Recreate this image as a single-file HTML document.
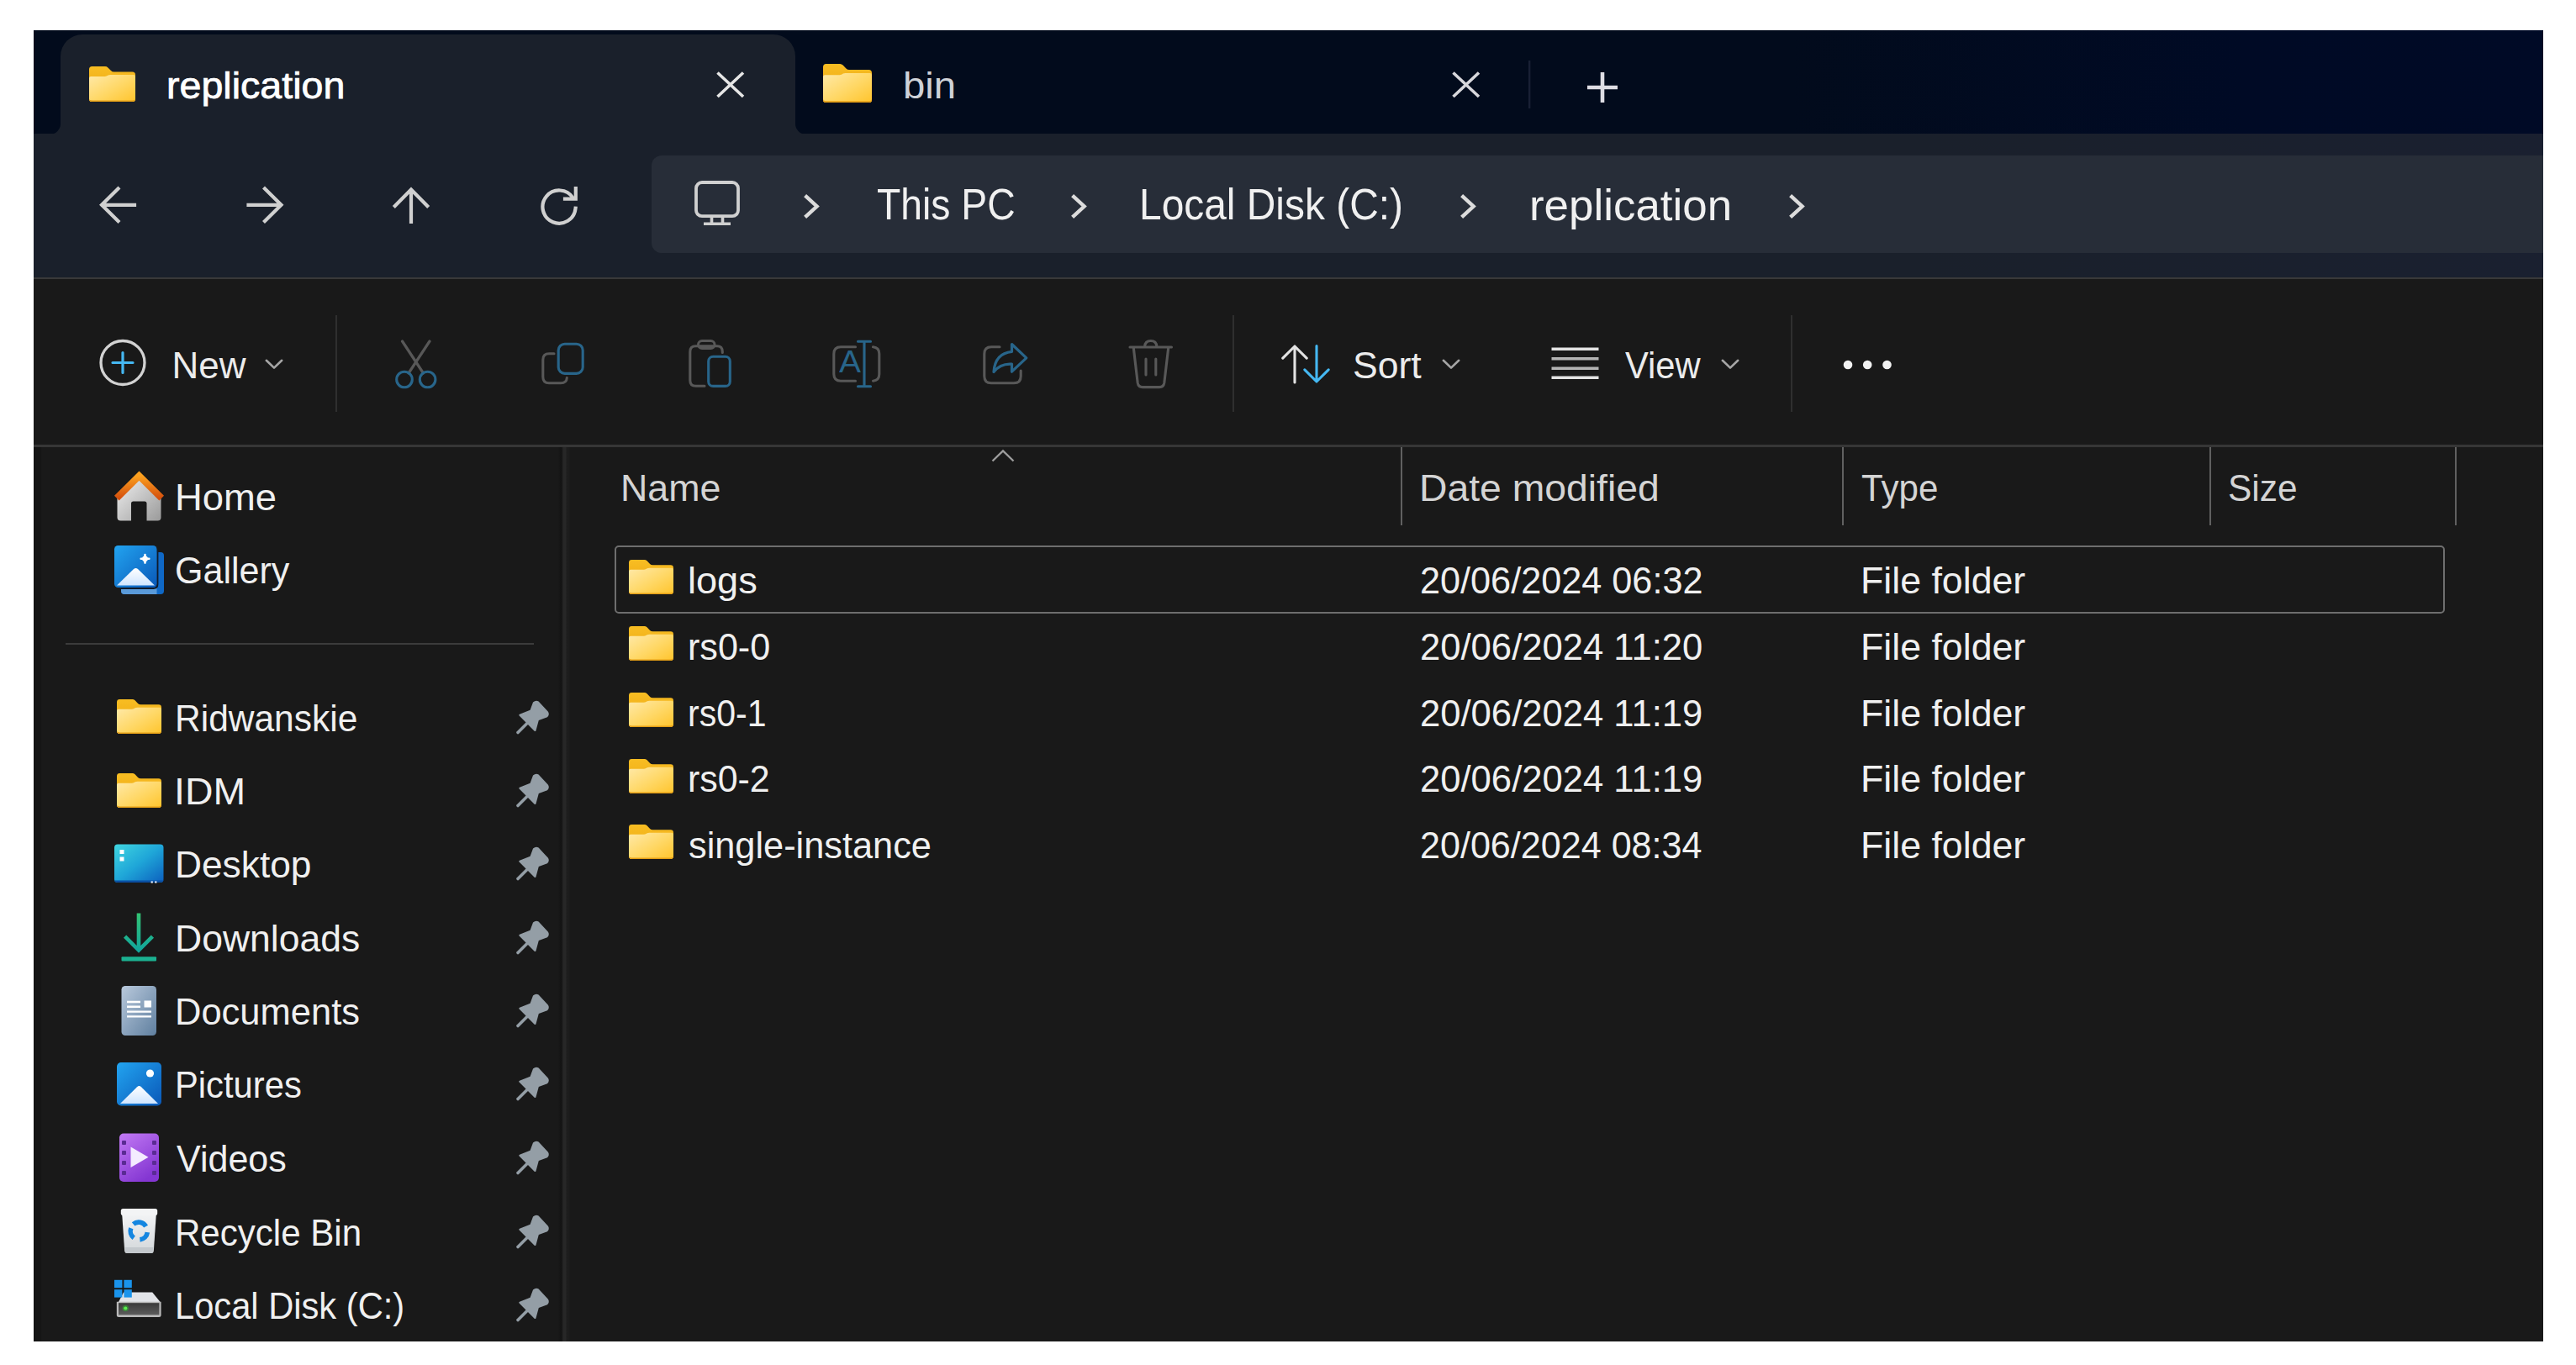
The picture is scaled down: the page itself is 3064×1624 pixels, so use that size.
<!DOCTYPE html>
<html lang="en"><head><meta charset="utf-8"><title>replication - File Explorer</title>
<style>
html,body{margin:0;padding:0;background:#fff;}
body{width:3064px;height:1624px;position:relative;overflow:hidden;font-family:"Liberation Sans",sans-serif;}
.a{position:absolute;}
.t{position:absolute;white-space:nowrap;line-height:1;transform-origin:0 0;display:block;}
svg{position:absolute;overflow:visible;}
</style></head><body>
<svg width="0" height="0" style="left:0;top:0"><defs>
<linearGradient id="gFb" x1="0" y1="0" x2="0" y2="1"><stop offset="0" stop-color="#f8bd22"/><stop offset="1" stop-color="#eaa413"/></linearGradient>
<linearGradient id="gFf" x1="0" y1="0" x2="1" y2="1"><stop offset="0" stop-color="#ffe9a8"/><stop offset="0.55" stop-color="#ffd764"/><stop offset="1" stop-color="#ffc42c"/></linearGradient>
<linearGradient id="gRoof" x1="0" y1="0" x2="0" y2="1"><stop offset="0" stop-color="#fba01f"/><stop offset="1" stop-color="#d5500d"/></linearGradient>
<linearGradient id="gHouse" x1="0" y1="0" x2="1" y2="1"><stop offset="0" stop-color="#f2f2f2"/><stop offset="1" stop-color="#9a9a9a"/></linearGradient>
<linearGradient id="gBlue" x1="0" y1="0" x2="1" y2="1"><stop offset="0" stop-color="#22a4f0"/><stop offset="1" stop-color="#0a58b8"/></linearGradient>
<linearGradient id="gMtn" x1="0" y1="0" x2="0" y2="1"><stop offset="0" stop-color="#ffffff"/><stop offset="1" stop-color="#cfe5ff"/></linearGradient>
<linearGradient id="gDesk" x1="0" y1="0" x2="1" y2="1"><stop offset="0" stop-color="#40d6e0"/><stop offset="0.5" stop-color="#1fa6d8"/><stop offset="1" stop-color="#0c5fbe"/></linearGradient>
<linearGradient id="gDown" x1="0" y1="0" x2="0" y2="1"><stop offset="0" stop-color="#33c473"/><stop offset="1" stop-color="#12a69c"/></linearGradient>
<linearGradient id="gDoc" x1="0" y1="0" x2="1" y2="1"><stop offset="0" stop-color="#b9c9dc"/><stop offset="1" stop-color="#5f7f9f"/></linearGradient>
<linearGradient id="gVid" x1="0" y1="0" x2="0.6" y2="1"><stop offset="0" stop-color="#c27af4"/><stop offset="1" stop-color="#8436d2"/></linearGradient>
<linearGradient id="gBin" x1="0" y1="0" x2="0" y2="1"><stop offset="0" stop-color="#f4f5f6"/><stop offset="1" stop-color="#d3d7da"/></linearGradient>
<linearGradient id="gDrv" x1="0" y1="0" x2="0" y2="1"><stop offset="0" stop-color="#3a3a3a"/><stop offset="1" stop-color="#5c5c5c"/></linearGradient>
</defs></svg>
<div class="a" style="left:40px;top:36px;width:2985px;height:1560px;background:#191919;overflow:hidden"></div>
<div class="a" style="left:40px;top:36px;width:2985px;height:124px;background:linear-gradient(90deg,#020b1c 0,#020b1c 70%,#000a25 88%,#000a26 100%)"></div>
<div class="a" style="left:40px;top:159px;width:2985px;height:171px;background:linear-gradient(90deg,#1a202b 0,#1a202b 75%,#1a2030 100%)"></div>
<svg style="left:0;top:0" width="3064" height="170" viewBox="0 0 3064 170"><path d="M59 160A13 13 0 0 0 72 147V67A26 26 0 0 1 98 41H920A26 26 0 0 1 946 67V147A13 13 0 0 0 959 160Z" fill="#1a202b"/><rect x="1818" y="72" width="2.4" height="57" fill="#182034"/><path d="M853.5 86.5L884 115M884 86.5L853.5 115" stroke="#e6e6e6" stroke-width="3.6" fill="none"/><path d="M1728.5 86.5L1759 115M1759 86.5L1728.5 115" stroke="#d8d8dc" stroke-width="3.6" fill="none"/><path d="M1888 104H1924M1906 86V122" stroke="#dedee4" stroke-width="4.6" fill="none"/></svg>
<svg style="left:106px;top:79px" width="55" height="42" viewBox="0 0 55 42" preserveAspectRatio="none"><path d="M0 3.5Q0 0 3.5 0H19Q21 0 22.4 1.4L26 5Q27.4 6.5 29.5 6.5H51.5Q55 6.5 55 10V38.5Q55 42 51.5 42H3.5Q0 42 0 38.5Z" fill="url(#gFb)"/><path d="M0 14Q0 12 2 12H18.5Q20 12 21.2 11.3L22.6 10.6Q23.8 10 25.2 10H53Q55 10 55 12V38.5Q55 42 51.5 42H3.5Q0 42 0 38.5Z" fill="url(#gFf)"/><path d="M0 38.2V38.5Q0 42 3.5 42H51.5Q55 42 55 38.5V38.2Q55 40.4 51.5 40.4H3.5Q0 40.4 0 38.2Z" fill="#e59f16"/></svg>
<svg style="left:979px;top:76px" width="58" height="46" viewBox="0 0 55 42" preserveAspectRatio="none"><path d="M0 3.5Q0 0 3.5 0H19Q21 0 22.4 1.4L26 5Q27.4 6.5 29.5 6.5H51.5Q55 6.5 55 10V38.5Q55 42 51.5 42H3.5Q0 42 0 38.5Z" fill="url(#gFb)"/><path d="M0 14Q0 12 2 12H18.5Q20 12 21.2 11.3L22.6 10.6Q23.8 10 25.2 10H53Q55 10 55 12V38.5Q55 42 51.5 42H3.5Q0 42 0 38.5Z" fill="url(#gFf)"/><path d="M0 38.2V38.5Q0 42 3.5 42H51.5Q55 42 55 38.5V38.2Q55 40.4 51.5 40.4H3.5Q0 40.4 0 38.2Z" fill="#e59f16"/></svg>
<span class="t" style="left:198.38px;top:79.75px;font-size:44px;color:#ffffff;transform:scaleX(1.0587);-webkit-text-stroke:0.75px #fff;">replication</span>
<span class="t" style="left:1073.85px;top:79.75px;font-size:44px;color:#cfd2d8;transform:scaleX(1.0741);">bin</span>
<div class="a" style="left:40px;top:329.8px;width:2985px;height:2.6px;background:#393939"></div>
<div class="a" style="left:775px;top:185px;width:2250px;height:116px;background:#272d38;border-radius:12px 0 0 12px"></div>
<svg style="left:0;top:160px" width="900" height="170" viewBox="0 160 900 170" fill="none" stroke="#d0d0d0" stroke-width="4.2" stroke-linecap="square" stroke-linejoin="miter"><path d="M122 243.8H160M140.5 224.5L121 243.8L140.5 263"/><path d="M295.5 243.8H333.5M315 224.5L334.5 243.8L315 263"/><path d="M489 226.5V264M469.8 245L489 225.6L508.2 245"/><path d="M684.6 247.7A19.6 19.6 0 1 1 681.5 235.4"/><path d="M684.8 224V236.6H672"/><rect x="828" y="217" width="50" height="40.2" rx="7" stroke-width="3.8"/><path d="M846.5 258V265M859.5 258V265M837 266.2H869" stroke-width="3.6" stroke-linecap="butt"/></svg>
<svg style="left:955px;top:230px" width="20" height="31" viewBox="0 0 20 31"><path d="M2.6 2.6L16.6 15.5L2.6 28.4" fill="none" stroke="#dcdcdc" stroke-width="4.4" stroke-linecap="butt" stroke-linejoin="miter"/></svg>
<svg style="left:1272.5px;top:230px" width="20" height="31" viewBox="0 0 20 31"><path d="M2.6 2.6L16.6 15.5L2.6 28.4" fill="none" stroke="#dcdcdc" stroke-width="4.4" stroke-linecap="butt" stroke-linejoin="miter"/></svg>
<svg style="left:1736px;top:230px" width="20" height="31" viewBox="0 0 20 31"><path d="M2.6 2.6L16.6 15.5L2.6 28.4" fill="none" stroke="#dcdcdc" stroke-width="4.4" stroke-linecap="butt" stroke-linejoin="miter"/></svg>
<svg style="left:2126.5px;top:230px" width="20" height="31" viewBox="0 0 20 31"><path d="M2.6 2.6L16.6 15.5L2.6 28.4" fill="none" stroke="#dcdcdc" stroke-width="4.4" stroke-linecap="butt" stroke-linejoin="miter"/></svg>
<span class="t" style="left:1043.11px;top:216.98px;font-size:52px;color:#f0f0f0;transform:scaleX(0.8901);">This PC</span>
<span class="t" style="left:1355.32px;top:216.98px;font-size:52px;color:#f0f0f0;transform:scaleX(0.9209);">Local Disk (C:)</span>
<span class="t" style="left:1819.45px;top:217.98px;font-size:52px;color:#f0f0f0;transform:scaleX(1.0173);">replication</span>
<div class="a" style="left:40px;top:529.2px;width:2985px;height:2.6px;background:#363636"></div>
<div class="a" style="left:398.5px;top:375px;width:2.2px;height:115px;background:#2f2f2f"></div>
<div class="a" style="left:1466px;top:375px;width:2.2px;height:115px;background:#2f2f2f"></div>
<div class="a" style="left:2130px;top:375px;width:2.2px;height:115px;background:#2f2f2f"></div>
<svg style="left:0;top:340px" width="3064" height="190" viewBox="0 340 3064 190" fill="none" stroke-width="3.1" stroke-linecap="round" stroke-linejoin="round"><circle cx="146" cy="431.5" r="26" stroke="#d2d2d2" stroke-width="3.3"/><path d="M134 431.5H158M146 419.5V443.5" stroke="#45b8f2" stroke-width="3.2"/><path d="M478.5 406L503.5 444M511 406L486 444" stroke="#585858" stroke-width="3.2"/><circle cx="481" cy="451.5" r="9.3" stroke="#28658a"/><circle cx="508.6" cy="451.5" r="9.3" stroke="#28658a"/><path d="M659 420.8H653Q645.8 420.8 645.8 428V448.5Q645.8 455.8 653 455.8H667Q674 455.8 674.3 449.5" stroke="#585858"/><rect x="664.2" y="409.2" width="29" height="35.2" rx="7.5" stroke="#28658a"/><path d="M838 459.3H827.5Q820.8 459.3 820.8 452.5V418.5Q820.8 411.8 827.5 411.8H853Q859.3 411.8 859.3 418.5V419.5" stroke="#585858"/><rect x="830.5" y="405.6" width="19.5" height="9" rx="4.5" stroke="#585858" stroke-width="3"/><rect x="842.7" y="424.2" width="25.6" height="35.2" rx="5.5" stroke="#28658a"/><path d="M1017.5 412.8H1000Q991.8 412.8 991.8 421V445Q991.8 453.2 1000 453.2H1017.5M1038.5 412.8Q1045.8 413.5 1045.8 421V445Q1045.8 452.5 1038.5 453.2" stroke="#585858"/><path d="M1020.5 406.2H1035.5M1020.5 459.8H1035.5M1028 406.2V459.8" stroke="#28658a"/><path d="M1189 412.8H1179Q1170.8 412.8 1170.8 421V447.5Q1170.8 455.8 1179 455.8H1206Q1214.2 455.8 1214.2 447.5V441" stroke="#585858"/><path d="M1203.5 409.5L1220.8 425.8L1203.5 442.2V433.2Q1190 432.2 1182 442.5Q1183.5 420.5 1203.5 418.4Z" stroke="#28658a" stroke-width="3.2"/><path d="M1344 413H1393.5M1361.5 412.5Q1362 405.5 1368.8 405.5Q1375.5 405.5 1376 412.5M1348.3 414L1353.2 455.5Q1354 460.6 1359 460.6H1379Q1384 460.6 1384.8 455.5L1389.7 414M1363 427V446M1374.8 427V446" stroke="#585858"/><path d="M1540 412.5V455M1525.8 426.2L1540 412L1554.2 426.2" stroke="#e2e2e2"/><path d="M1566 411.5V454M1551.8 439.8L1566 454L1580.2 439.8" stroke="#45b8f2"/><path d="M1845.5 415.3H1901.5M1845.5 449.3H1901.5" stroke="#e4e4e4" stroke-width="3.6" stroke-linecap="butt"/><path d="M1845.5 426.8H1901.5M1845.5 438.2H1901.5" stroke="#b4b4b4" stroke-width="3.6" stroke-linecap="butt"/><circle cx="2198" cy="434" r="5.3" fill="#f2f2f2"/><circle cx="2221.2" cy="434" r="5.3" fill="#f2f2f2"/><circle cx="2244.5" cy="434" r="5.3" fill="#f2f2f2"/></svg>
<span class="a" style="left:997.5px;top:412.5px;font-size:36px;line-height:1;color:#28658a;transform:scaleX(1.08);transform-origin:0 0">A</span>
<svg style="left:315px;top:427px" width="22" height="13" viewBox="0 0 22 13"><path d="M1.8 1.8L11 10.6L20.2 1.8" fill="none" stroke="#a6a6a6" stroke-width="2.6" stroke-linecap="round" stroke-linejoin="round"/></svg>
<svg style="left:1714.5px;top:427px" width="22" height="13" viewBox="0 0 22 13"><path d="M1.8 1.8L11 10.6L20.2 1.8" fill="none" stroke="#a6a6a6" stroke-width="2.6" stroke-linecap="round" stroke-linejoin="round"/></svg>
<svg style="left:2046.5px;top:427px" width="22" height="13" viewBox="0 0 22 13"><path d="M1.8 1.8L11 10.6L20.2 1.8" fill="none" stroke="#a6a6a6" stroke-width="2.6" stroke-linecap="round" stroke-linejoin="round"/></svg>
<span class="t" style="left:204.50px;top:412.75px;font-size:44px;color:#ececec;transform:scaleX(1.0000);">New</span>
<span class="t" style="left:1608.97px;top:412.75px;font-size:44px;color:#ececec;transform:scaleX(1.0128);">Sort</span>
<span class="t" style="left:1932.50px;top:412.75px;font-size:44px;color:#ececec;transform:scaleX(0.9474);">View</span>
<div class="a" style="left:40px;top:532px;width:10px;height:1064px;background:linear-gradient(90deg,#141414 0,#141414 75%,#191919 100%)"></div>
<div class="a" style="left:664px;top:532px;width:14px;height:1064px;background:linear-gradient(90deg,#191919 0,#141414 20%,#151515 30%,#272727 42%,#272727 62%,#1e1e1e 72%,#1d1d1d 92%,#191919 100%)"></div>
<div class="a" style="left:77.5px;top:764.8px;width:557px;height:2.6px;background:#3b3b3b"></div>
<span class="t" style="left:207.91px;top:570.25px;font-size:44px;color:#f0f0f0;transform:scaleX(1.0310);">Home</span>
<span class="t" style="left:208.04px;top:656.75px;font-size:44px;color:#f0f0f0;transform:scaleX(0.9781);">Gallery</span>
<span class="t" style="left:208.10px;top:832.75px;font-size:44px;color:#f0f0f0;transform:scaleX(0.9661);">Ridwanskie</span>
<span class="t" style="left:206.78px;top:919.75px;font-size:44px;color:#f0f0f0;transform:scaleX(1.0541);">IDM</span>
<span class="t" style="left:207.98px;top:1006.75px;font-size:44px;color:#f0f0f0;transform:scaleX(1.0064);">Desktop</span>
<span class="t" style="left:207.96px;top:1094.75px;font-size:44px;color:#f0f0f0;transform:scaleX(1.0117);">Downloads</span>
<span class="t" style="left:208.03px;top:1181.75px;font-size:44px;color:#f0f0f0;transform:scaleX(0.9886);">Documents</span>
<span class="t" style="left:208.15px;top:1268.75px;font-size:44px;color:#f0f0f0;transform:scaleX(0.9484);">Pictures</span>
<span class="t" style="left:210.00px;top:1356.75px;font-size:44px;color:#f0f0f0;transform:scaleX(0.9774);">Videos</span>
<span class="t" style="left:208.13px;top:1444.75px;font-size:44px;color:#f0f0f0;transform:scaleX(0.9559);">Recycle Bin</span>
<span class="t" style="left:208.16px;top:1531.75px;font-size:44px;color:#f0f0f0;transform:scaleX(0.9470);">Local Disk (C:)</span>
<svg style="left:614px;top:834px" width="40" height="40" viewBox="614 834 40 40"><path d="M634 835.5Q637.5 832.5 640.6 834.6L652 846.8Q654 850.5 651 853.2L640.8 857L637.4 869.5Q636.4 870.6 635.4 869.4L617.6 851.6Q616.6 850.4 618 849.8L630.6 844.8Z" fill="#949ea6"/><path d="M627.5 860L616 871.5" stroke="#949ea6" stroke-width="3.6" stroke-linecap="round"/></svg>
<svg style="left:614px;top:921px" width="40" height="40" viewBox="614 834 40 40"><path d="M634 835.5Q637.5 832.5 640.6 834.6L652 846.8Q654 850.5 651 853.2L640.8 857L637.4 869.5Q636.4 870.6 635.4 869.4L617.6 851.6Q616.6 850.4 618 849.8L630.6 844.8Z" fill="#949ea6"/><path d="M627.5 860L616 871.5" stroke="#949ea6" stroke-width="3.6" stroke-linecap="round"/></svg>
<svg style="left:614px;top:1008px" width="40" height="40" viewBox="614 834 40 40"><path d="M634 835.5Q637.5 832.5 640.6 834.6L652 846.8Q654 850.5 651 853.2L640.8 857L637.4 869.5Q636.4 870.6 635.4 869.4L617.6 851.6Q616.6 850.4 618 849.8L630.6 844.8Z" fill="#949ea6"/><path d="M627.5 860L616 871.5" stroke="#949ea6" stroke-width="3.6" stroke-linecap="round"/></svg>
<svg style="left:614px;top:1096px" width="40" height="40" viewBox="614 834 40 40"><path d="M634 835.5Q637.5 832.5 640.6 834.6L652 846.8Q654 850.5 651 853.2L640.8 857L637.4 869.5Q636.4 870.6 635.4 869.4L617.6 851.6Q616.6 850.4 618 849.8L630.6 844.8Z" fill="#949ea6"/><path d="M627.5 860L616 871.5" stroke="#949ea6" stroke-width="3.6" stroke-linecap="round"/></svg>
<svg style="left:614px;top:1183px" width="40" height="40" viewBox="614 834 40 40"><path d="M634 835.5Q637.5 832.5 640.6 834.6L652 846.8Q654 850.5 651 853.2L640.8 857L637.4 869.5Q636.4 870.6 635.4 869.4L617.6 851.6Q616.6 850.4 618 849.8L630.6 844.8Z" fill="#949ea6"/><path d="M627.5 860L616 871.5" stroke="#949ea6" stroke-width="3.6" stroke-linecap="round"/></svg>
<svg style="left:614px;top:1270px" width="40" height="40" viewBox="614 834 40 40"><path d="M634 835.5Q637.5 832.5 640.6 834.6L652 846.8Q654 850.5 651 853.2L640.8 857L637.4 869.5Q636.4 870.6 635.4 869.4L617.6 851.6Q616.6 850.4 618 849.8L630.6 844.8Z" fill="#949ea6"/><path d="M627.5 860L616 871.5" stroke="#949ea6" stroke-width="3.6" stroke-linecap="round"/></svg>
<svg style="left:614px;top:1358px" width="40" height="40" viewBox="614 834 40 40"><path d="M634 835.5Q637.5 832.5 640.6 834.6L652 846.8Q654 850.5 651 853.2L640.8 857L637.4 869.5Q636.4 870.6 635.4 869.4L617.6 851.6Q616.6 850.4 618 849.8L630.6 844.8Z" fill="#949ea6"/><path d="M627.5 860L616 871.5" stroke="#949ea6" stroke-width="3.6" stroke-linecap="round"/></svg>
<svg style="left:614px;top:1446px" width="40" height="40" viewBox="614 834 40 40"><path d="M634 835.5Q637.5 832.5 640.6 834.6L652 846.8Q654 850.5 651 853.2L640.8 857L637.4 869.5Q636.4 870.6 635.4 869.4L617.6 851.6Q616.6 850.4 618 849.8L630.6 844.8Z" fill="#949ea6"/><path d="M627.5 860L616 871.5" stroke="#949ea6" stroke-width="3.6" stroke-linecap="round"/></svg>
<svg style="left:614px;top:1533px" width="40" height="40" viewBox="614 834 40 40"><path d="M634 835.5Q637.5 832.5 640.6 834.6L652 846.8Q654 850.5 651 853.2L640.8 857L637.4 869.5Q636.4 870.6 635.4 869.4L617.6 851.6Q616.6 850.4 618 849.8L630.6 844.8Z" fill="#949ea6"/><path d="M627.5 860L616 871.5" stroke="#949ea6" stroke-width="3.6" stroke-linecap="round"/></svg>
<svg style="left:139px;top:832px" width="53" height="41" viewBox="0 0 55 42" preserveAspectRatio="none"><path d="M0 3.5Q0 0 3.5 0H19Q21 0 22.4 1.4L26 5Q27.4 6.5 29.5 6.5H51.5Q55 6.5 55 10V38.5Q55 42 51.5 42H3.5Q0 42 0 38.5Z" fill="url(#gFb)"/><path d="M0 14Q0 12 2 12H18.5Q20 12 21.2 11.3L22.6 10.6Q23.8 10 25.2 10H53Q55 10 55 12V38.5Q55 42 51.5 42H3.5Q0 42 0 38.5Z" fill="url(#gFf)"/><path d="M0 38.2V38.5Q0 42 3.5 42H51.5Q55 42 55 38.5V38.2Q55 40.4 51.5 40.4H3.5Q0 40.4 0 38.2Z" fill="#e59f16"/></svg>
<svg style="left:139px;top:919.5px" width="53" height="41" viewBox="0 0 55 42" preserveAspectRatio="none"><path d="M0 3.5Q0 0 3.5 0H19Q21 0 22.4 1.4L26 5Q27.4 6.5 29.5 6.5H51.5Q55 6.5 55 10V38.5Q55 42 51.5 42H3.5Q0 42 0 38.5Z" fill="url(#gFb)"/><path d="M0 14Q0 12 2 12H18.5Q20 12 21.2 11.3L22.6 10.6Q23.8 10 25.2 10H53Q55 10 55 12V38.5Q55 42 51.5 42H3.5Q0 42 0 38.5Z" fill="url(#gFf)"/><path d="M0 38.2V38.5Q0 42 3.5 42H51.5Q55 42 55 38.5V38.2Q55 40.4 51.5 40.4H3.5Q0 40.4 0 38.2Z" fill="#e59f16"/></svg>
<svg style="left:0;top:532px" width="700" height="1064" viewBox="0 532 700 1064"><path d="M139.5 592L165.5 567L191.5 592V615.5Q191.5 619.5 187.5 619.5H143.5Q139.5 619.5 139.5 615.5Z" fill="url(#gHouse)"/><path d="M156 620V599Q156 596.5 158.5 596.5H172Q174.5 596.5 174.5 599V620Z" fill="#191919"/><path d="M138.8 592.6L165.5 566.2L192.2 592.6" fill="none" stroke="url(#gRoof)" stroke-width="8" stroke-linecap="butt" stroke-linejoin="miter"/><rect x="144" y="657" width="51" height="50" rx="4" fill="#0f68c6"/><path d="M144 698.5H186.5V707H148Q144 707 144 703Z" fill="#5a9ad9"/><path d="M187.3 655V695Q187.3 699.8 182.5 699.8H142" fill="none" stroke="#0f1a2a" stroke-width="2.2"/><rect x="136" y="649" width="50.5" height="50" rx="4.5" fill="url(#gBlue)"/><path d="M139 696.5L159 677Q161.5 674.8 164 677L184 696.5Z" fill="url(#gMtn)"/><circle cx="172.5" cy="664.8" r="3.4" fill="#fff"/><path d="M172.5 660V669.6M167.7 664.8H177.3" stroke="#fff" stroke-width="2.6" stroke-linecap="round"/><rect x="136" y="1004.5" width="58.5" height="45.5" rx="4" fill="url(#gDesk)"/><path d="M136 1047.4H194.5V1046.5Q194.5 1050 190.5 1050H140Q136 1050 136 1046.5Z" fill="#0a4fa2"/><rect x="142.5" y="1011" width="5" height="5" fill="#fff"/><rect x="142.5" y="1019.5" width="5" height="5" fill="#fff"/><rect x="179.6" y="1048.4" width="2.2" height="2.2" fill="#e8f2ff"/><rect x="184.2" y="1048.4" width="2.2" height="2.2" fill="#e8f2ff"/><path d="M165 1086.5V1130M148.6 1114.2L165 1130.6L181.4 1114.2" fill="none" stroke="url(#gDown)" stroke-width="4.6" stroke-linecap="butt" stroke-linejoin="miter"/><rect x="144.5" y="1138.2" width="41.5" height="5.2" rx="1" fill="#1bb191"/><rect x="144.5" y="1173" width="41.5" height="59" rx="4.5" fill="url(#gDoc)"/><path d="M151 1192H167M151 1197.8H167M151 1203.6H180M151 1209.4H180" stroke="#fff" stroke-width="2.4" fill="none"/><rect x="171.5" y="1190.5" width="8.5" height="8" fill="#fff"/><rect x="139" y="1264" width="53" height="51.5" rx="5" fill="url(#gBlue)"/><path d="M143 1313L163 1293.2Q165.5 1291 168 1293.2L188 1313Z" fill="url(#gMtn)"/><circle cx="178.5" cy="1277" r="4.6" fill="#fff"/><rect x="142" y="1348.5" width="47" height="57.5" rx="5" fill="url(#gVid)"/><rect x="145" y="1357" width="5" height="5" rx="1" fill="#5a2b93"/><rect x="145" y="1369" width="5" height="5" rx="1" fill="#5a2b93"/><rect x="145" y="1381" width="5" height="5" rx="1" fill="#5a2b93"/><rect x="145" y="1393" width="5" height="5" rx="1" fill="#5a2b93"/><rect x="181" y="1357" width="5" height="5" rx="1" fill="#5a2b93"/><rect x="181" y="1369" width="5" height="5" rx="1" fill="#5a2b93"/><rect x="181" y="1381" width="5" height="5" rx="1" fill="#5a2b93"/><rect x="181" y="1393" width="5" height="5" rx="1" fill="#5a2b93"/><path d="M155.5 1364.5V1389L176.5 1376.8Z" fill="#f4ecff"/><path d="M145 1442H186L182.8 1488.5Q182.6 1491 180 1491H151Q148.4 1491 148.2 1488.5Z" fill="url(#gBin)"/><rect x="143.8" y="1438" width="43.4" height="8" rx="2.5" fill="#f3f4f5"/><path d="M148.6 1484H182.4L182 1488.5Q181.8 1491 179.5 1491H151.5Q149.2 1491 149 1488.5Z" fill="#c3c8cc"/><g fill="none" stroke="#1486e0" stroke-width="5.6"><path d="M158.6 1456.4A10 10 0 0 1 173.6 1459.2"/><path d="M175.3 1466.2A10 10 0 0 1 166.4 1474.9"/><path d="M159.2 1472.8A10 10 0 0 1 155.8 1461.2"/></g><path d="M147 1537.4H181.2L190.6 1549H141Z" fill="#e2e4e8"/><rect x="136" y="1522.8" width="9.4" height="9.4" fill="#1a94ec"/><rect x="136" y="1534.2" width="9.4" height="9.4" fill="#1a94ec"/><rect x="147.4" y="1522.8" width="9.4" height="9.4" fill="#1a94ec"/><rect x="147.4" y="1534.2" width="9.4" height="9.4" fill="#1a94ec"/><path d="M138.8 1548.8H191.6V1564.5Q191.6 1567 189 1567H141.4Q138.8 1567 138.8 1564.5Z" fill="#b9b9b9"/><rect x="141" y="1550.2" width="48.4" height="14.2" fill="url(#gDrv)"/><circle cx="149.3" cy="1556.5" r="3.8" fill="#2fbf2f" opacity="0.45"/><circle cx="149.3" cy="1556.5" r="2.1" fill="#58ee4e"/></svg>
<div class="a" style="left:1666.3px;top:532px;width:2.2px;height:93px;background:#606060"></div>
<div class="a" style="left:2191.3px;top:532px;width:2.2px;height:93px;background:#606060"></div>
<div class="a" style="left:2628.3px;top:532px;width:2.2px;height:93px;background:#606060"></div>
<div class="a" style="left:2919.8px;top:532px;width:2.2px;height:93px;background:#606060"></div>
<svg style="left:1179px;top:534px" width="28" height="16" viewBox="0 0 28 16"><path d="M1.5 14.5L14 2.5L26.5 14.5" fill="none" stroke="#9c9c9c" stroke-width="2.4"/></svg>
<span class="t" style="left:737.95px;top:558.75px;font-size:44px;color:#d4d4d4;transform:scaleX(1.0177);">Name</span>
<span class="t" style="left:1687.84px;top:558.75px;font-size:44px;color:#d4d4d4;transform:scaleX(1.0526);">Date modified</span>
<span class="t" style="left:2214.00px;top:558.75px;font-size:44px;color:#d4d4d4;transform:scaleX(0.9574);">Type</span>
<span class="t" style="left:2650.07px;top:558.75px;font-size:44px;color:#d4d4d4;transform:scaleX(0.9634);">Size</span>
<div class="a" style="left:730.5px;top:648.5px;width:2177px;height:81.5px;box-sizing:border-box;border:2.4px solid #6e6e6e;border-radius:5px"></div>
<svg style="left:748px;top:666px" width="53" height="41" viewBox="0 0 55 42" preserveAspectRatio="none"><path d="M0 3.5Q0 0 3.5 0H19Q21 0 22.4 1.4L26 5Q27.4 6.5 29.5 6.5H51.5Q55 6.5 55 10V38.5Q55 42 51.5 42H3.5Q0 42 0 38.5Z" fill="url(#gFb)"/><path d="M0 14Q0 12 2 12H18.5Q20 12 21.2 11.3L22.6 10.6Q23.8 10 25.2 10H53Q55 10 55 12V38.5Q55 42 51.5 42H3.5Q0 42 0 38.5Z" fill="url(#gFf)"/><path d="M0 38.2V38.5Q0 42 3.5 42H51.5Q55 42 55 38.5V38.2Q55 40.4 51.5 40.4H3.5Q0 40.4 0 38.2Z" fill="#e59f16"/></svg>
<span class="t" style="left:817.95px;top:668.75px;font-size:44px;color:#f0f0f0;transform:scaleX(1.0256);">logs</span>
<span class="t" style="left:1689.04px;top:668.75px;font-size:44px;color:#f0f0f0;transform:scaleX(0.9823);">20/06/2024 06:32</span>
<span class="t" style="left:2212.95px;top:668.75px;font-size:44px;color:#f0f0f0;transform:scaleX(1.0158);">File folder</span>
<svg style="left:748px;top:745px" width="53" height="41" viewBox="0 0 55 42" preserveAspectRatio="none"><path d="M0 3.5Q0 0 3.5 0H19Q21 0 22.4 1.4L26 5Q27.4 6.5 29.5 6.5H51.5Q55 6.5 55 10V38.5Q55 42 51.5 42H3.5Q0 42 0 38.5Z" fill="url(#gFb)"/><path d="M0 14Q0 12 2 12H18.5Q20 12 21.2 11.3L22.6 10.6Q23.8 10 25.2 10H53Q55 10 55 12V38.5Q55 42 51.5 42H3.5Q0 42 0 38.5Z" fill="url(#gFf)"/><path d="M0 38.2V38.5Q0 42 3.5 42H51.5Q55 42 55 38.5V38.2Q55 40.4 51.5 40.4H3.5Q0 40.4 0 38.2Z" fill="#e59f16"/></svg>
<span class="t" style="left:818.04px;top:747.75px;font-size:44px;color:#f0f0f0;transform:scaleX(0.9794);">rs0-0</span>
<span class="t" style="left:1689.02px;top:747.75px;font-size:44px;color:#f0f0f0;transform:scaleX(0.9911);">20/06/2024 11:20</span>
<span class="t" style="left:2212.95px;top:747.75px;font-size:44px;color:#f0f0f0;transform:scaleX(1.0158);">File folder</span>
<svg style="left:748px;top:824px" width="53" height="41" viewBox="0 0 55 42" preserveAspectRatio="none"><path d="M0 3.5Q0 0 3.5 0H19Q21 0 22.4 1.4L26 5Q27.4 6.5 29.5 6.5H51.5Q55 6.5 55 10V38.5Q55 42 51.5 42H3.5Q0 42 0 38.5Z" fill="url(#gFb)"/><path d="M0 14Q0 12 2 12H18.5Q20 12 21.2 11.3L22.6 10.6Q23.8 10 25.2 10H53Q55 10 55 12V38.5Q55 42 51.5 42H3.5Q0 42 0 38.5Z" fill="url(#gFf)"/><path d="M0 38.2V38.5Q0 42 3.5 42H51.5Q55 42 55 38.5V38.2Q55 40.4 51.5 40.4H3.5Q0 40.4 0 38.2Z" fill="#e59f16"/></svg>
<span class="t" style="left:818.13px;top:826.75px;font-size:44px;color:#f0f0f0;transform:scaleX(0.9330);">rs0-1</span>
<span class="t" style="left:1689.02px;top:826.75px;font-size:44px;color:#f0f0f0;transform:scaleX(0.9911);">20/06/2024 11:19</span>
<span class="t" style="left:2212.95px;top:826.75px;font-size:44px;color:#f0f0f0;transform:scaleX(1.0158);">File folder</span>
<svg style="left:748px;top:902.5px" width="53" height="41" viewBox="0 0 55 42" preserveAspectRatio="none"><path d="M0 3.5Q0 0 3.5 0H19Q21 0 22.4 1.4L26 5Q27.4 6.5 29.5 6.5H51.5Q55 6.5 55 10V38.5Q55 42 51.5 42H3.5Q0 42 0 38.5Z" fill="url(#gFb)"/><path d="M0 14Q0 12 2 12H18.5Q20 12 21.2 11.3L22.6 10.6Q23.8 10 25.2 10H53Q55 10 55 12V38.5Q55 42 51.5 42H3.5Q0 42 0 38.5Z" fill="url(#gFf)"/><path d="M0 38.2V38.5Q0 42 3.5 42H51.5Q55 42 55 38.5V38.2Q55 40.4 51.5 40.4H3.5Q0 40.4 0 38.2Z" fill="#e59f16"/></svg>
<span class="t" style="left:818.05px;top:905.25px;font-size:44px;color:#f0f0f0;transform:scaleX(0.9742);">rs0-2</span>
<span class="t" style="left:1689.02px;top:905.25px;font-size:44px;color:#f0f0f0;transform:scaleX(0.9911);">20/06/2024 11:19</span>
<span class="t" style="left:2212.95px;top:905.25px;font-size:44px;color:#f0f0f0;transform:scaleX(1.0158);">File folder</span>
<svg style="left:748px;top:981px" width="53" height="41" viewBox="0 0 55 42" preserveAspectRatio="none"><path d="M0 3.5Q0 0 3.5 0H19Q21 0 22.4 1.4L26 5Q27.4 6.5 29.5 6.5H51.5Q55 6.5 55 10V38.5Q55 42 51.5 42H3.5Q0 42 0 38.5Z" fill="url(#gFb)"/><path d="M0 14Q0 12 2 12H18.5Q20 12 21.2 11.3L22.6 10.6Q23.8 10 25.2 10H53Q55 10 55 12V38.5Q55 42 51.5 42H3.5Q0 42 0 38.5Z" fill="url(#gFf)"/><path d="M0 38.2V38.5Q0 42 3.5 42H51.5Q55 42 55 38.5V38.2Q55 40.4 51.5 40.4H3.5Q0 40.4 0 38.2Z" fill="#e59f16"/></svg>
<span class="t" style="left:819.02px;top:983.75px;font-size:44px;color:#f0f0f0;transform:scaleX(0.9845);">single-instance</span>
<span class="t" style="left:1689.04px;top:983.75px;font-size:44px;color:#f0f0f0;transform:scaleX(0.9794);">20/06/2024 08:34</span>
<span class="t" style="left:2212.95px;top:983.75px;font-size:44px;color:#f0f0f0;transform:scaleX(1.0158);">File folder</span>
</body></html>
